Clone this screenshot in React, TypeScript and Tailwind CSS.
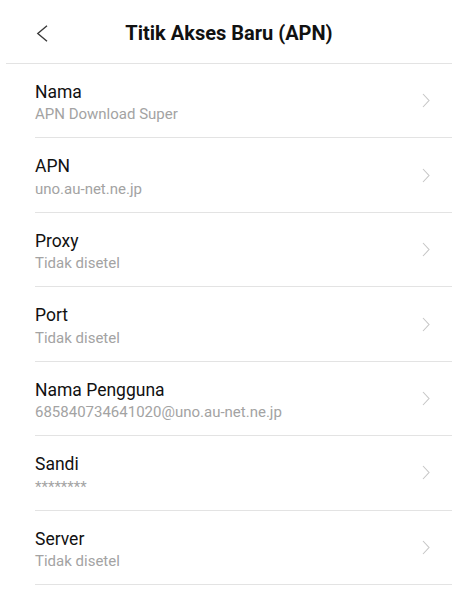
import React from 'react';

const rows = [
  { title: 'Nama', value: 'APN Download Super' },
  { title: 'APN', value: 'uno.au-net.ne.jp' },
  { title: 'Proxy', value: 'Tidak disetel' },
  { title: 'Port', value: 'Tidak disetel' },
  { title: 'Nama Pengguna', value: '685840734641020@uno.au-net.ne.jp' },
  { title: 'Sandi', value: '********' },
  { title: 'Server', value: 'Tidak disetel' },
];

const Chevron = () => (
  <svg width="8" height="15" viewBox="0 0 8 15" fill="none">
    <path d="M1 1l6 6.5-6 6.5" stroke="#c6c6c6" strokeWidth="1.1" />
  </svg>
);

const App = () => {
  return (
    <div className="w-[465px] h-[589px] overflow-hidden bg-white font-['Roboto',sans-serif]">
      <div className="ml-[6px] mr-[13px] h-[64px] pt-[2px] flex items-center border-b border-[#e3e3e3] relative">
        <div className="pl-[30px] pt-[2px] w-[60px]">
          <svg width="12" height="17" viewBox="0 0 12 17" fill="none">
            <path d="M11 0.8L1.8 8.5l9.2 7.7" stroke="#3a3a3a" strokeWidth="1.4" />
          </svg>
        </div>
        <h1 className="absolute left-0 right-0 text-center text-[20px] font-bold text-[#111] pointer-events-none">
          Titik Akses Baru (APN)
        </h1>
      </div>
      <div className="ml-[35px] mr-[13px]">
        {rows.map((row) => (
          <div
            key={row.title}
            className="h-[74.45px] flex items-center justify-between border-b border-[#e3e3e3]"
          >
            <div className="flex flex-col pt-[4px]">
              <span className="text-[17.5px] leading-[23.5px] text-[#111]">{row.title}</span>
              <span className="text-[15px] leading-[20px] text-[#a3a3a3]">{row.value}</span>
            </div>
            <div className="pr-[22px] flex items-center">
              <Chevron />
            </div>
          </div>
        ))}
      </div>
    </div>
  );
};

export default App;
